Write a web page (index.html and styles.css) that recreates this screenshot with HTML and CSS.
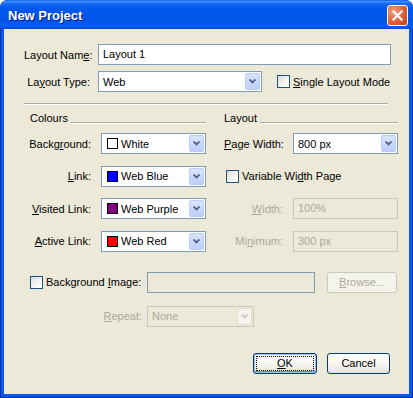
FILE: index.html
```html
<!DOCTYPE html>
<html lang="en">
<head>
  <meta charset="UTF-8">
  <title>New Project</title>
  <link rel="stylesheet" href="styles.css">
</head>
<body>
  <div class="window">
    <div class="titlebar">
      <span class="title">New Project</span>
      <span class="close">
        <svg width="11" height="11" viewBox="0 0 11 11"><path d="M1.5 1.5 L9.5 9.5 M9.5 1.5 L1.5 9.5" stroke="#fff" stroke-width="2.2" stroke-linecap="square"/></svg>
      </span>
    </div>

    <div class="client">
      <div class="top">
        <div class="row">
          <label class="lbl lbl-top">Layout Nam<u>e</u>:</label>
          <div class="textbox name">Layout 1</div>
        </div>
        <div class="row">
          <label class="lbl lbl-top">La<u>y</u>out Type:</label>
          <div class="combo type">
            <span class="val">Web</span>
            <span class="drop"><svg width="7" height="5" viewBox="0 0 7 5"><path d="M0.5 0.5 L3.5 3.5 L6.5 0.5" fill="none" stroke="#4d6185" stroke-width="1.8"/></svg></span>
          </div>
          <label class="check single"><span class="box"></span><span><u>S</u>ingle Layout Mode</span></label>
        </div>
      </div>

      <div class="sep"></div>

      <div class="groups">
        <div class="group colours">
          <div class="ghead"><span>Colours</span><span class="gline"></span></div>
          <div class="grows">
            <div class="row">
              <label class="lbl lbl-col">Backg<u>r</u>ound:</label>
              <div class="combo col">
                <span class="val"><span class="swatch white"></span>White</span>
                <span class="drop"><svg width="7" height="5" viewBox="0 0 7 5"><path d="M0.5 0.5 L3.5 3.5 L6.5 0.5" fill="none" stroke="#4d6185" stroke-width="1.8"/></svg></span>
              </div>
            </div>
            <div class="row">
              <label class="lbl lbl-col"><u>L</u>ink:</label>
              <div class="combo col">
                <span class="val"><span class="swatch blue"></span>Web Blue</span>
                <span class="drop"><svg width="7" height="5" viewBox="0 0 7 5"><path d="M0.5 0.5 L3.5 3.5 L6.5 0.5" fill="none" stroke="#4d6185" stroke-width="1.8"/></svg></span>
              </div>
            </div>
            <div class="row">
              <label class="lbl lbl-col"><u>V</u>isited Link:</label>
              <div class="combo col">
                <span class="val"><span class="swatch purple"></span>Web Purple</span>
                <span class="drop"><svg width="7" height="5" viewBox="0 0 7 5"><path d="M0.5 0.5 L3.5 3.5 L6.5 0.5" fill="none" stroke="#4d6185" stroke-width="1.8"/></svg></span>
              </div>
            </div>
            <div class="row">
              <label class="lbl lbl-col"><u>A</u>ctive Link:</label>
              <div class="combo col">
                <span class="val"><span class="swatch red"></span>Web Red</span>
                <span class="drop"><svg width="7" height="5" viewBox="0 0 7 5"><path d="M0.5 0.5 L3.5 3.5 L6.5 0.5" fill="none" stroke="#4d6185" stroke-width="1.8"/></svg></span>
              </div>
            </div>
          </div>
        </div>

        <div class="group layout">
          <div class="ghead"><span>Layout</span><span class="gline"></span></div>
          <div class="grows">
            <div class="row">
              <label class="lbl lbl-lay"><u>P</u>age Width:</label>
              <div class="combo col">
                <span class="val">800 px</span>
                <span class="drop"><svg width="7" height="5" viewBox="0 0 7 5"><path d="M0.5 0.5 L3.5 3.5 L6.5 0.5" fill="none" stroke="#4d6185" stroke-width="1.8"/></svg></span>
              </div>
            </div>
            <div class="row">
              <label class="check variable"><span class="box"></span><span>Variable Wi<u>d</u>th Page</span></label>
            </div>
            <div class="row">
              <label class="lbl lbl-lay disabled"><u>W</u>idth:</label>
              <div class="textbox col off">100%</div>
            </div>
            <div class="row">
              <label class="lbl lbl-lay disabled">Mi<u>n</u>imum:</label>
              <div class="textbox col off">300 px</div>
            </div>
          </div>
        </div>
      </div>

      <div class="bgimage">
        <div class="row">
          <label class="check bgcheck"><span class="box"></span><span>Background <u>I</u>mage:</span></label>
          <div class="textbox path"></div>
          <button class="btn browse" disabled><u>B</u>rowse...</button>
        </div>
        <div class="row">
          <label class="lbl lbl-rep disabled"><u>R</u>epeat:</label>
          <div class="combo repeat off">
            <span class="val">None</span>
            <span class="drop"><svg width="7" height="5" viewBox="0 0 7 5"><path d="M0.5 0.5 L3.5 3.5 L6.5 0.5" fill="none" stroke="#c9c7ba" stroke-width="1.8"/></svg></span>
          </div>
        </div>
      </div>

      <div class="actions">
        <button class="btn default"><u>O</u>K</button>
        <button class="btn">Cancel</button>
      </div>
    </div>
  </div>
</body>
</html>
```

FILE: styles.css
```css
body {
  margin: 0;
  font-family: "Liberation Sans", Arial, sans-serif;
  font-size: 11px;
  color: #000;
  background: #fff;
}
.window {
  width: 413px;
  height: 398px;
  display: flex;
  flex-direction: column;
  background: #0a58e8;
  border-radius: 8px 8px 0 0;
  box-shadow: inset 1px 0 #0030b8, inset -1px 0 #0030b8, inset 0 -1px #0030b8;
  overflow: hidden;
}
.titlebar {
  height: 29px;
  flex: none;
  display: flex;
  align-items: center;
  justify-content: space-between;
  padding: 0 5px 0 8px;
  border-radius: 8px 8px 0 0;
  background: linear-gradient(to bottom, #0a5ef0 0%, #3d8dff 5%, #1566f6 14%, #0058ee 30%, #0055e5 70%, #005ef5 90%, #0048d8 100%);
}
.title {
  color: #fff;
  font-weight: bold;
  font-size: 13px;
  text-shadow: 1px 1px #0a1883;
  margin-top: 1px;
}
.close {
  width: 19px;
  height: 19px;
  margin-top: 1px;
  display: flex;
  align-items: center;
  justify-content: center;
  border: 1px solid #fff;
  border-radius: 3px;
  background: radial-gradient(circle at 30% 30%, #f09f80, #e0603a 55%, #c13b13);
}
.client {
  flex: 1;
  margin: 0 4px 4px;
  background: #ece9d8;
  padding: 15px 19px 0 20px;
  display: flex;
  flex-direction: column;
}
.row {
  display: flex;
  align-items: center;
  height: 21px;
}
.row > * { flex: none; }
.top {
  display: flex;
  flex-direction: column;
  gap: 6px;
}
.lbl {
  text-align: right;
  padding-right: 8px;
  white-space: nowrap;
}
.lbl-top { width: 66px; }
.lbl-col { width: 67px; padding-right: 10px; }
.lbl-lay { width: 59px; padding-right: 10px; }
.lbl-rep { width: 118px; padding-right: 5px; }
.disabled { color: #aca899; }

.textbox {
  height: 21px;
  box-sizing: border-box;
  border: 1px solid #7f9db9;
  background: #fff;
  padding: 0 4px;
  line-height: 19px;
}
.textbox.name { width: 293px; }
.textbox.col { width: 105px; }
.textbox.off {
  border-color: #c9c7ba;
  background: #ece9d8;
  color: #aca899;
}
.textbox.path {
  width: 168px;
  background: #ece9d8;
}

.combo {
  height: 21px;
  box-sizing: border-box;
  border: 1px solid #7f9db9;
  background: #fff;
  display: flex;
  align-items: stretch;
}
.combo .val {
  flex: 1;
  display: flex;
  align-items: center;
  padding-left: 4px;
  white-space: nowrap;
}
.combo .drop {
  width: 15px;
  margin: 1px;
  box-sizing: border-box;
  border: 1px solid #b9cdf6;
  border-radius: 2px;
  background: linear-gradient(to bottom, #dae5fd, #bccefa);
  display: flex;
  align-items: center;
  justify-content: center;
}
.combo.type { width: 164px; }
.combo.col { width: 105px; }
.combo.repeat { width: 107px; }
.combo.off {
  border-color: #c9c7ba;
  background: #ece9d8;
  color: #aca899;
}
.combo.off .drop {
  border-color: #e2dfd2;
  background: #f4f3ee;
}
.swatch {
  width: 11px;
  height: 11px;
  box-sizing: border-box;
  border: 1px solid #000;
  margin: 0 3px 0 1px;
}
.swatch.white { background: #fff; }
.swatch.blue { background: #0000ff; }
.swatch.purple { background: #800080; }
.swatch.red { background: #ff0000; }

.check {
  display: flex;
  align-items: center;
  white-space: nowrap;
}
.box {
  width: 13px;
  height: 13px;
  box-sizing: border-box;
  border: 1px solid #1c5180;
  background: linear-gradient(135deg, #dcdcd7, #fff 80%);
  margin-right: 3px;
  flex: none;
}
.check.single { margin-left: 15px; }
.check.variable { margin-left: 2px; }
.check.bgcheck { margin-left: 6px; width: 117px; }

.sep {
  width: 364px;
  height: 1px;
  background: #aca899;
  border-bottom: 1px solid #fff;
  margin-top: 11px;
}

.groups {
  display: flex;
  gap: 18px;
  margin-top: 7px;
}
.group.colours { width: 182px; }
.group.layout { width: 174px; }
.ghead {
  display: flex;
  align-items: flex-end;
  height: 13px;
  line-height: 13px;
}
.colours .ghead { padding-left: 6px; }
.ghead .gline {
  flex: 1;
  height: 1px;
  background: #aca899;
  margin: 0 0 2px 3px;
  box-shadow: 0 1px #fff;
}
.grows {
  display: flex;
  flex-direction: column;
  gap: 11.67px;
  margin-top: 8px;
}

.bgimage {
  display: flex;
  flex-direction: column;
  gap: 13px;
  margin-top: 20px;
}

.btn {
  height: 21px;
  width: 64px;
  box-sizing: border-box;
  border: 1px solid #003c74;
  border-radius: 3px;
  background: linear-gradient(to bottom, #fff 0%, #f5f4ef 60%, #e3e0d6 100%);
  font-family: inherit;
  font-size: 11px;
  color: #000;
  padding: 0;
  position: relative;
}
.btn.browse {
  width: 70px;
  margin-left: 12px;
  border-color: #c9c7ba;
  background: #f5f4ea;
  color: #aca899;
}
.btn.default {
  box-shadow: inset 0 0 0 1px #9fbef4, inset 0 -1px 0 1px #6e8ee8;
}
.btn.default::after {
  content: "";
  position: absolute;
  inset: 2px;
  border: 1px dotted #000;
}
.actions {
  display: flex;
  justify-content: flex-end;
  gap: 10px;
  margin-top: 26px;
}
.actions .btn:last-child { width: 63px; }
```
